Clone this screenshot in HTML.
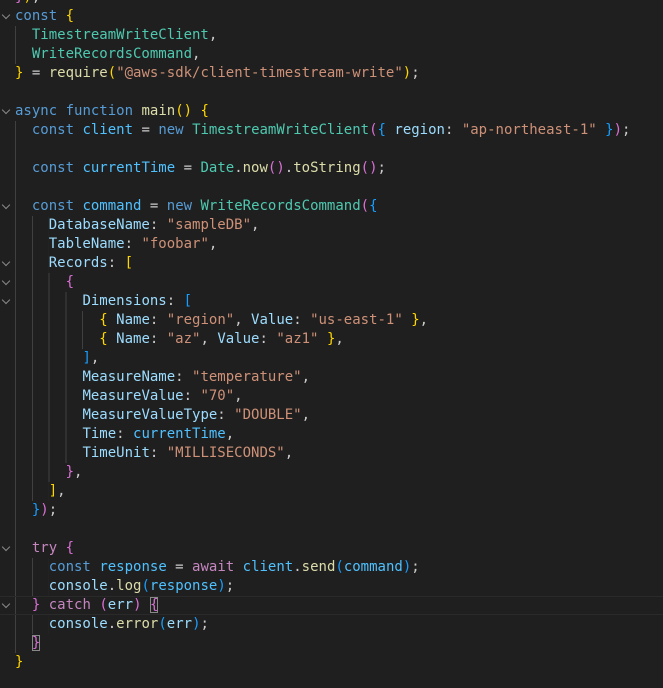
<!DOCTYPE html>
<html><head><meta charset="utf-8"><style>
html,body{margin:0;padding:0;background:#1f1f1f;width:663px;height:688px;overflow:hidden}
#code{position:absolute;left:0;top:-12px;width:663px;font-family:"DejaVu Sans Mono","Liberation Mono",monospace;font-size:14px;color:#cccccc}
.l{position:relative;height:19px;line-height:19px;padding-left:15px;white-space:pre;
background-image:repeating-linear-gradient(to right,#404040 0 1px,transparent 1px 16.8px);
background-repeat:no-repeat;background-position:15px 0;background-size:calc(var(--d,0) * 16.8px) 19px}
.cur{box-shadow:inset 0 1px #2a2a2a,inset 0 -1px #2a2a2a}
.fold::before{content:"";position:absolute;left:3px;top:5px;width:5px;height:5px;border-right:1px solid #8a8a8a;border-bottom:1px solid #8a8a8a;transform:rotate(45deg)}
.k{color:#569cd6}.c{color:#c586c0}.v{color:#9cdcfe}.n{color:#4fc1ff}.t{color:#4ec9b0}.f{color:#dcdcaa}.s{color:#ce9178}
.y{color:#ffd700}.o{color:#da70d6}.b{color:#179fff}
.box{outline:1px solid #888;outline-offset:-1px}
</style></head><body><div id="code">
<div class="l"><span class="o">}</span><span class="y">)</span>;</div>
<div class="l fold"><span class="k">const</span> <span class="y">{</span></div>
<div class="l" style="--d:1">  <span class="t">TimestreamWriteClient</span>,</div>
<div class="l" style="--d:1">  <span class="t">WriteRecordsCommand</span>,</div>
<div class="l"><span class="y">}</span> = <span class="f">require</span><span class="y">(</span><span class="s">"@aws-sdk/client-timestream-write"</span><span class="y">)</span>;</div>
<div class="l"></div>
<div class="l fold"><span class="k">async</span> <span class="k">function</span> <span class="f">main</span><span class="y">()</span> <span class="y">{</span></div>
<div class="l" style="--d:1">  <span class="k">const</span> <span class="n">client</span> = <span class="k">new</span> <span class="t">TimestreamWriteClient</span><span class="o">(</span><span class="b">{</span> <span class="v">region</span>: <span class="s">"ap-northeast-1"</span> <span class="b">}</span><span class="o">)</span>;</div>
<div class="l" style="--d:1"></div>
<div class="l" style="--d:1">  <span class="k">const</span> <span class="n">currentTime</span> = <span class="t">Date</span>.<span class="f">now</span><span class="o">()</span>.<span class="f">toString</span><span class="o">()</span>;</div>
<div class="l" style="--d:1"></div>
<div class="l fold" style="--d:1">  <span class="k">const</span> <span class="n">command</span> = <span class="k">new</span> <span class="t">WriteRecordsCommand</span><span class="o">(</span><span class="b">{</span></div>
<div class="l" style="--d:2">    <span class="v">DatabaseName</span>: <span class="s">"sampleDB"</span>,</div>
<div class="l" style="--d:2">    <span class="v">TableName</span>: <span class="s">"foobar"</span>,</div>
<div class="l fold" style="--d:2">    <span class="v">Records</span>: <span class="y">[</span></div>
<div class="l fold" style="--d:3">      <span class="o">{</span></div>
<div class="l fold" style="--d:4">        <span class="v">Dimensions</span>: <span class="b">[</span></div>
<div class="l" style="--d:5">          <span class="y">{</span> <span class="v">Name</span>: <span class="s">"region"</span>, <span class="v">Value</span>: <span class="s">"us-east-1"</span> <span class="y">}</span>,</div>
<div class="l" style="--d:5">          <span class="y">{</span> <span class="v">Name</span>: <span class="s">"az"</span>, <span class="v">Value</span>: <span class="s">"az1"</span> <span class="y">}</span>,</div>
<div class="l" style="--d:4">        <span class="b">]</span>,</div>
<div class="l" style="--d:4">        <span class="v">MeasureName</span>: <span class="s">"temperature"</span>,</div>
<div class="l" style="--d:4">        <span class="v">MeasureValue</span>: <span class="s">"70"</span>,</div>
<div class="l" style="--d:4">        <span class="v">MeasureValueType</span>: <span class="s">"DOUBLE"</span>,</div>
<div class="l" style="--d:4">        <span class="v">Time</span>: <span class="n">currentTime</span>,</div>
<div class="l" style="--d:4">        <span class="v">TimeUnit</span>: <span class="s">"MILLISECONDS"</span>,</div>
<div class="l" style="--d:3">      <span class="o">}</span>,</div>
<div class="l" style="--d:2">    <span class="y">]</span>,</div>
<div class="l" style="--d:1">  <span class="b">}</span><span class="o">)</span>;</div>
<div class="l" style="--d:1"></div>
<div class="l fold" style="--d:1">  <span class="c">try</span> <span class="o">{</span></div>
<div class="l" style="--d:2">    <span class="k">const</span> <span class="n">response</span> = <span class="c">await</span> <span class="n">client</span>.<span class="f">send</span><span class="b">(</span><span class="n">command</span><span class="b">)</span>;</div>
<div class="l" style="--d:2">    <span class="v">console</span>.<span class="f">log</span><span class="b">(</span><span class="n">response</span><span class="b">)</span>;</div>
<div class="l fold cur" style="--d:1">  <span class="o">}</span> <span class="c">catch</span> <span class="o">(</span><span class="v">err</span><span class="o">)</span> <span class="o box">{</span></div>
<div class="l" style="--d:2">    <span class="v">console</span>.<span class="f">error</span><span class="b">(</span><span class="v">err</span><span class="b">)</span>;</div>
<div class="l" style="--d:1">  <span class="o box">}</span></div>
<div class="l"><span class="y">}</span></div>
</div></body></html>
